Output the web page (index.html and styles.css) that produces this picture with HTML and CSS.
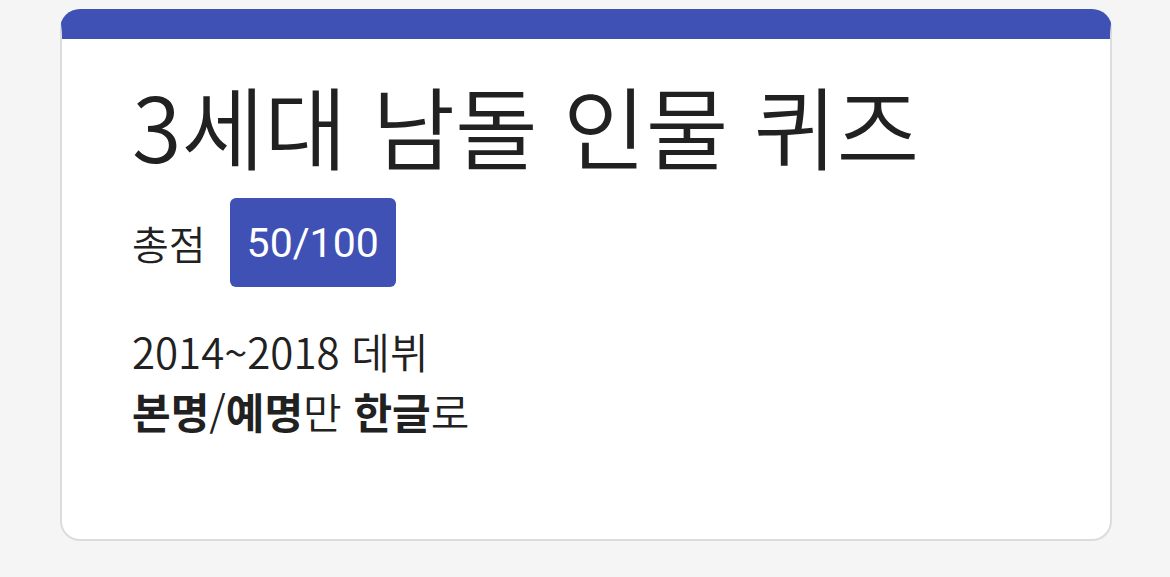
FILE: index.html
```html
<!DOCTYPE html>
<html lang="ko">
  <head>
    <meta charset="UTF-8" />
    <meta name="viewport" content="width=device-width, initial-scale=1.0" />
    <title>3세대 남돌 인물 퀴즈</title>
    <link rel="stylesheet" href="styles.css">
  </head>
  <body>
    <div class="quiz-card">
      <div class="quiz-body">
        <h1 class="quiz-title">3세대 남돌 인물 퀴즈</h1>
        <div class="score-row">
          <span class="score-label">총점</span>
          <span class="score-badge">50/100</span>
        </div>
        <div class="quiz-info">
          <p>2014~2018 데뷔</p>
          <p><b>본명</b>/<b>예명</b>만 <b>한글</b>로</p>
        </div>
      </div>
    </div>
  </body>
</html>
```

FILE: styles.css
```css
body {
  margin: 0;
  padding: 9px 58px 36px 60px;
  background-color: #f5f5f5;
  font-family: "Noto Sans CJK KR", "Noto Sans", sans-serif;
  color: #212121;
}

.quiz-card {
  height: 500px;
  background-color: #fff;
  border: 2px solid #dcdcdc;
  border-top: 30px solid #3f51b5;
  border-radius: 20px;
}

.quiz-body {
  padding: 31px 70px 0;
}

.quiz-title {
  margin: 0;
  font-size: 90px;
  font-weight: 350;
  line-height: 1.2;
}

.score-row {
  display: flex;
  align-items: center;
  gap: 24px;
  margin-top: 20px;
}

.score-label {
  font-size: 40px;
  font-weight: 350;
}

.score-badge {
  padding: 0 17px;
  height: 89px;
  display: flex;
  align-items: center;
  background-color: #3f51b5;
  color: #fff;
  border-radius: 6px;
  font-family: Roboto, sans-serif;
  font-size: 41px;
}

.quiz-info {
  margin-top: 34px;
  font-size: 42px;
  font-weight: 350;
  line-height: 60px;
}

.quiz-info p {
  margin: 0;
}

.quiz-info b {
  font-weight: 700;
}
```
